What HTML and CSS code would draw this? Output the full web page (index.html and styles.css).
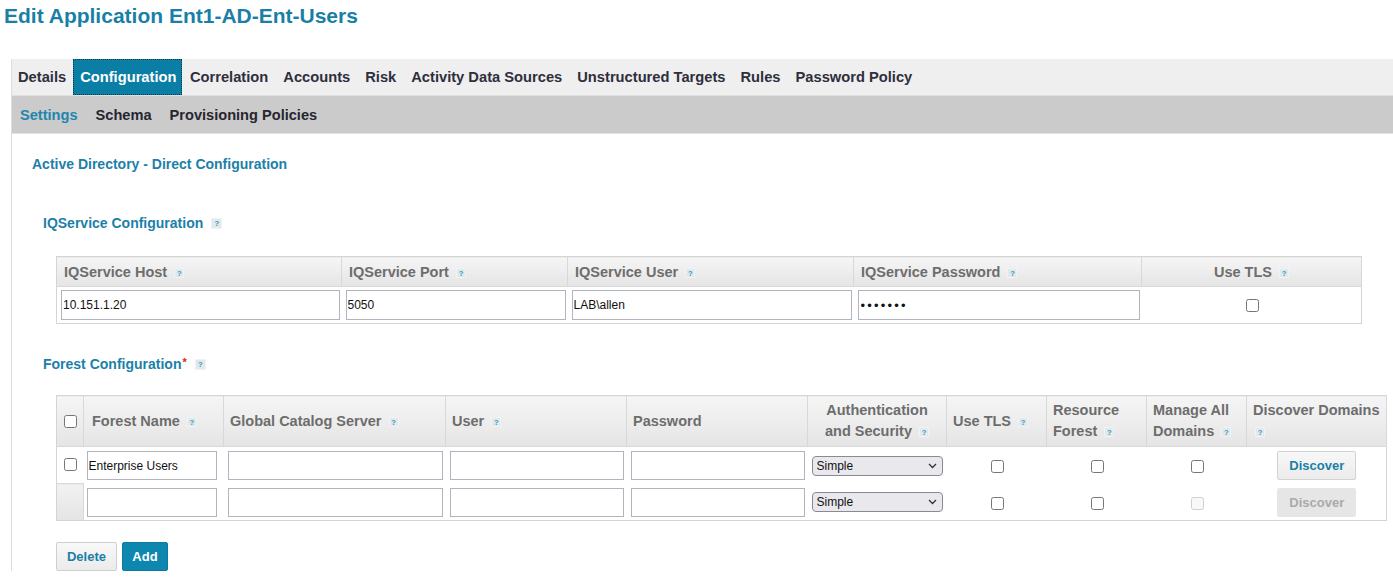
FILE: index.html
```html
<!DOCTYPE html>
<html>
<head>
<meta charset="utf-8">
<title>Edit Application</title>
<link rel="stylesheet" href="styles.css">
</head>
<body>
<h1 class="page-title">Edit Application Ent1-AD-Ent-Users</h1>
<div class="app-frame">
  <nav class="tabs">
    <span class="tab">Details</span>
    <span class="tab active">Configuration</span>
    <span class="tab">Correlation</span>
    <span class="tab">Accounts</span>
    <span class="tab">Risk</span>
    <span class="tab">Activity Data Sources</span>
    <span class="tab">Unstructured Targets</span>
    <span class="tab">Rules</span>
    <span class="tab">Password Policy</span>
  </nav>
  <nav class="subtabs">
    <span class="subtab active">Settings</span>
    <span class="subtab">Schema</span>
    <span class="subtab">Provisioning Policies</span>
  </nav>
  <div class="content">
    <h2 class="config-title">Active Directory - Direct Configuration</h2>

    <div class="section">
      <h3 class="section-title">IQService Configuration <span class="help">?</span></h3>
      <table class="grid iq-grid">
        <colgroup>
          <col style="width:285px"><col style="width:226px"><col style="width:286px"><col style="width:288px"><col style="width:220px">
        </colgroup>
        <thead>
          <tr>
            <th>IQService Host <span class="help">?</span></th>
            <th>IQService Port <span class="help">?</span></th>
            <th>IQService User <span class="help">?</span></th>
            <th>IQService Password <span class="help">?</span></th>
            <th class="center">Use TLS <span class="help">?</span></th>
          </tr>
        </thead>
        <tbody>
          <tr>
            <td><input class="text-input" type="text" value="10.151.1.20"></td>
            <td><input class="text-input" type="text" value="5050"></td>
            <td><input class="text-input" type="text" value="LAB\allen"></td>
            <td><input class="text-input pw" type="password" value="1234567"></td>
            <td class="center"><input class="cb" type="checkbox"></td>
          </tr>
        </tbody>
      </table>

      <h3 class="section-title forest-title">Forest Configuration<span class="req">*</span> <span class="help">?</span></h3>
      <table class="grid forest-grid">
        <colgroup>
          <col style="width:27px"><col style="width:140px"><col style="width:222px"><col style="width:181px"><col style="width:181px"><col style="width:139px"><col style="width:100px"><col style="width:100px"><col style="width:100px"><col style="width:140px">
        </colgroup>
        <thead>
          <tr>
            <th class="cb-cell"><input class="cb" type="checkbox"></th>
            <th>Forest Name <span class="help">?</span></th>
            <th>Global Catalog Server <span class="help">?</span></th>
            <th>User <span class="help">?</span></th>
            <th>Password</th>
            <th class="center">Authentication<br>and Security <span class="help">?</span></th>
            <th>Use TLS <span class="help">?</span></th>
            <th>Resource<br>Forest <span class="help">?</span></th>
            <th>Manage All<br>Domains <span class="help">?</span></th>
            <th>Discover Domains<br><span class="help first">?</span></th>
          </tr>
        </thead>
        <tbody>
          <tr>
            <td class="cb-cell"><input class="cb" type="checkbox"></td>
            <td class="name-cell"><input class="text-input" type="text" value="Enterprise Users"></td>
            <td><input class="text-input" type="text"></td>
            <td><input class="text-input" type="text"></td>
            <td><input class="text-input" type="text"></td>
            <td class="sel-cell"><span class="select-wrap"><select class="select"><option>Simple</option></select><svg class="chev" width="9" height="6" viewBox="0 0 9 6"><polyline points="1,1 4.5,4.5 8,1" fill="none" stroke="#333" stroke-width="1.3"/></svg></span></td>
            <td class="center"><input class="cb" type="checkbox"></td>
            <td class="center"><input class="cb" type="checkbox"></td>
            <td class="center"><input class="cb" type="checkbox"></td>
            <td class="center"><button class="btn discover">Discover</button></td>
          </tr>
          <tr>
            <td class="cb-cell blank"></td>
            <td class="name-cell"><input class="text-input" type="text"></td>
            <td><input class="text-input" type="text"></td>
            <td><input class="text-input" type="text"></td>
            <td><input class="text-input" type="text"></td>
            <td class="sel-cell"><span class="select-wrap"><select class="select"><option>Simple</option></select><svg class="chev" width="9" height="6" viewBox="0 0 9 6"><polyline points="1,1 4.5,4.5 8,1" fill="none" stroke="#333" stroke-width="1.3"/></svg></span></td>
            <td class="center"><input class="cb" type="checkbox"></td>
            <td class="center"><input class="cb" type="checkbox"></td>
            <td class="center"><input class="cb" type="checkbox" disabled></td>
            <td class="center"><button class="btn discover" disabled>Discover</button></td>
          </tr>
        </tbody>
      </table>

      <div class="actions">
        <button class="btn delete">Delete</button>
        <button class="btn add">Add</button>
      </div>
    </div>
  </div>
</div>
</body>
</html>
```
FILE: styles.css
```css
* { box-sizing: border-box; }
body {
  margin: 0;
  font-family: "Liberation Sans", Arial, sans-serif;
  background: #fff;
  color: #333;
}
.page-title {
  margin: 0;
  padding: 4px 0 0 4px;
  font-size: 21px;
  line-height: 24px;
  font-weight: bold;
  color: #1a7fa6;
}
.app-frame {
  margin: 31px 0 0 11px;
  border-left: 1px solid #dedede;
  min-height: 490px;
}
.tabs {
  display: flex;
  height: 37px;
  background: #efefef;
  border-bottom: 1px solid #e0e0e0;
}
.tab {
  display: flex;
  align-items: center;
  padding: 0 7.5px;
  font-size: 14.7px;
  font-weight: bold;
  color: #2e2e3c;
  white-space: nowrap;
}
.tab:first-child { padding-left: 6px; padding-right: 7px; }
.tab.active {
  background: #0a7ea5;
  color: #fff;
  padding: 0 6px 0 7px;
  outline: 1px dotted #0b3a4a;
  outline-offset: -1px;
}
.subtabs {
  display: flex;
  height: 38px;
  background: #cbcbcb;
  border-bottom: 1px solid #e2e2e2;
}
.subtab {
  display: flex;
  align-items: center;
  padding: 0 9px;
  font-size: 14.6px;
  font-weight: bold;
  color: #262630;
}
.subtab:first-child { padding-left: 8px; }
.subtab.active { color: #1f86ae; }
.content { padding: 22px 0 0 20px; }
.config-title {
  margin: 0;
  font-size: 14px;
  line-height: 17px;
  font-weight: bold;
  color: #1d80a8;
}
.section { margin-left: 11px; }
.section-title {
  margin: 42px 0 0 0;
  font-size: 14px;
  line-height: 17px;
  font-weight: bold;
  color: #1d80a8;
  display: flex;
  align-items: center;
}
.section-title .help { margin-left: 8px; width: 11px; height: 11px; line-height: 10px; }
.forest-title { margin-top: 32px; }
.req {
  color: #e0201c;
  font-size: 11px;
  line-height: 11px;
  margin: 0 0 5px 1px;
}
.help {
  display: inline-block;
  width: 10px;
  height: 10px;
  line-height: 9px;
  margin-left: 3px;
  background: #e3e8ea;
  border: 1px solid #f0f2f3;
  color: #2a9cc6;
  font-size: 7.5px;
  font-weight: bold;
  text-align: center;
  vertical-align: middle;
}
.help.first { margin-left: 2px; }
.grid {
  margin: 24px 0 0 13px;
  border-collapse: collapse;
  table-layout: fixed;
  border: 1px solid #d4d4d4;
}
.iq-grid { width: 1305px; }
.forest-grid { width: 1330px; margin-top: 22px; }
.grid th {
  height: 30px;
  padding: 0 7px;
  text-align: left;
  font-size: 14.5px;
  font-weight: bold;
  color: #6d6d6d;
  background: linear-gradient(#f5f5f5, #e5e5e5);
  border-right: 1px solid #d8d8d8;
  border-bottom: 1px solid #d8d8d8;
  white-space: nowrap;
}
.forest-grid th {
  height: 51px;
  line-height: 21px;
  padding: 0 6px;
}
.forest-grid th:nth-child(2) { padding-left: 8px; }
.grid th.center, .grid td.center { text-align: center; }
.grid td {
  padding: 3px 2px 3px 4px;
  height: 36px;
  vertical-align: middle;
}
.forest-grid td { height: 37px; padding: 4px 3px 3px 4px; }
.forest-grid td.name-cell { padding: 4px 7px 3px 3px; }
.grid th.cb-cell, .grid td.cb-cell {
  padding: 0;
  text-align: center;
}
.forest-grid td.cb-cell { padding-bottom: 3px; }
.grid td.cb-cell.blank {
  background: linear-gradient(#f2f2f2, #e4e4e4);
  border-top: 1px solid #d8d8d8;
  border-right: 1px solid #d8d8d8;
}
.text-input {
  display: block;
  width: 100%;
  height: 30px;
  margin: 0;
  padding: 0 1px;
  border: 1px solid #b3b3bf;
  border-radius: 0;
  font-family: "Liberation Sans", Arial, sans-serif;
  font-size: 12px;
  color: #111;
  background: #fff;
}
.forest-grid .text-input { height: 29px; }
.pw { font-size: 13px; letter-spacing: 2.2px; padding-left: 2px; }
.cb {
  width: 13px;
  height: 13px;
  margin: 0;
  vertical-align: middle;
}
.sel-cell { text-align: left; }
.select-wrap {
  position: relative;
  display: inline-block;
  vertical-align: middle;
}
.select {
  appearance: none;
  -webkit-appearance: none;
  width: 131px;
  height: 20px;
  padding: 0 4px;
  border: 1px solid #8a8a96;
  border-radius: 4px;
  background: #e9e9ed;
  font-family: "Liberation Sans", Arial, sans-serif;
  font-size: 12px;
  color: #111;
  display: block;
}
.chev {
  position: absolute;
  right: 6px;
  top: 7px;
}
.btn {
  height: 29px;
  border-radius: 2px;
  font-family: "Liberation Sans", Arial, sans-serif;
  font-size: 13px;
  font-weight: bold;
  cursor: pointer;
}
.discover {
  width: 79px;
  border: 1px solid #d2d2d2;
  background: linear-gradient(#f8f8f8, #ebebeb);
  color: #1a7fa6;
}
.discover:disabled {
  border: 1px solid #e6e6e6;
  background: #e6e6e6;
  color: #aaaaaa;
}
.actions {
  display: flex;
  gap: 5px;
  margin: 21px 0 0 13px;
}
.delete {
  width: 61px;
  border: 1px solid #cfcfcf;
  background: linear-gradient(#f8f8f8, #ebebeb);
  color: #1a7fa6;
}
.add {
  width: 46px;
  border: 1px solid #0a7aa0;
  background: #0d87b0;
  color: #fff;
}
```
